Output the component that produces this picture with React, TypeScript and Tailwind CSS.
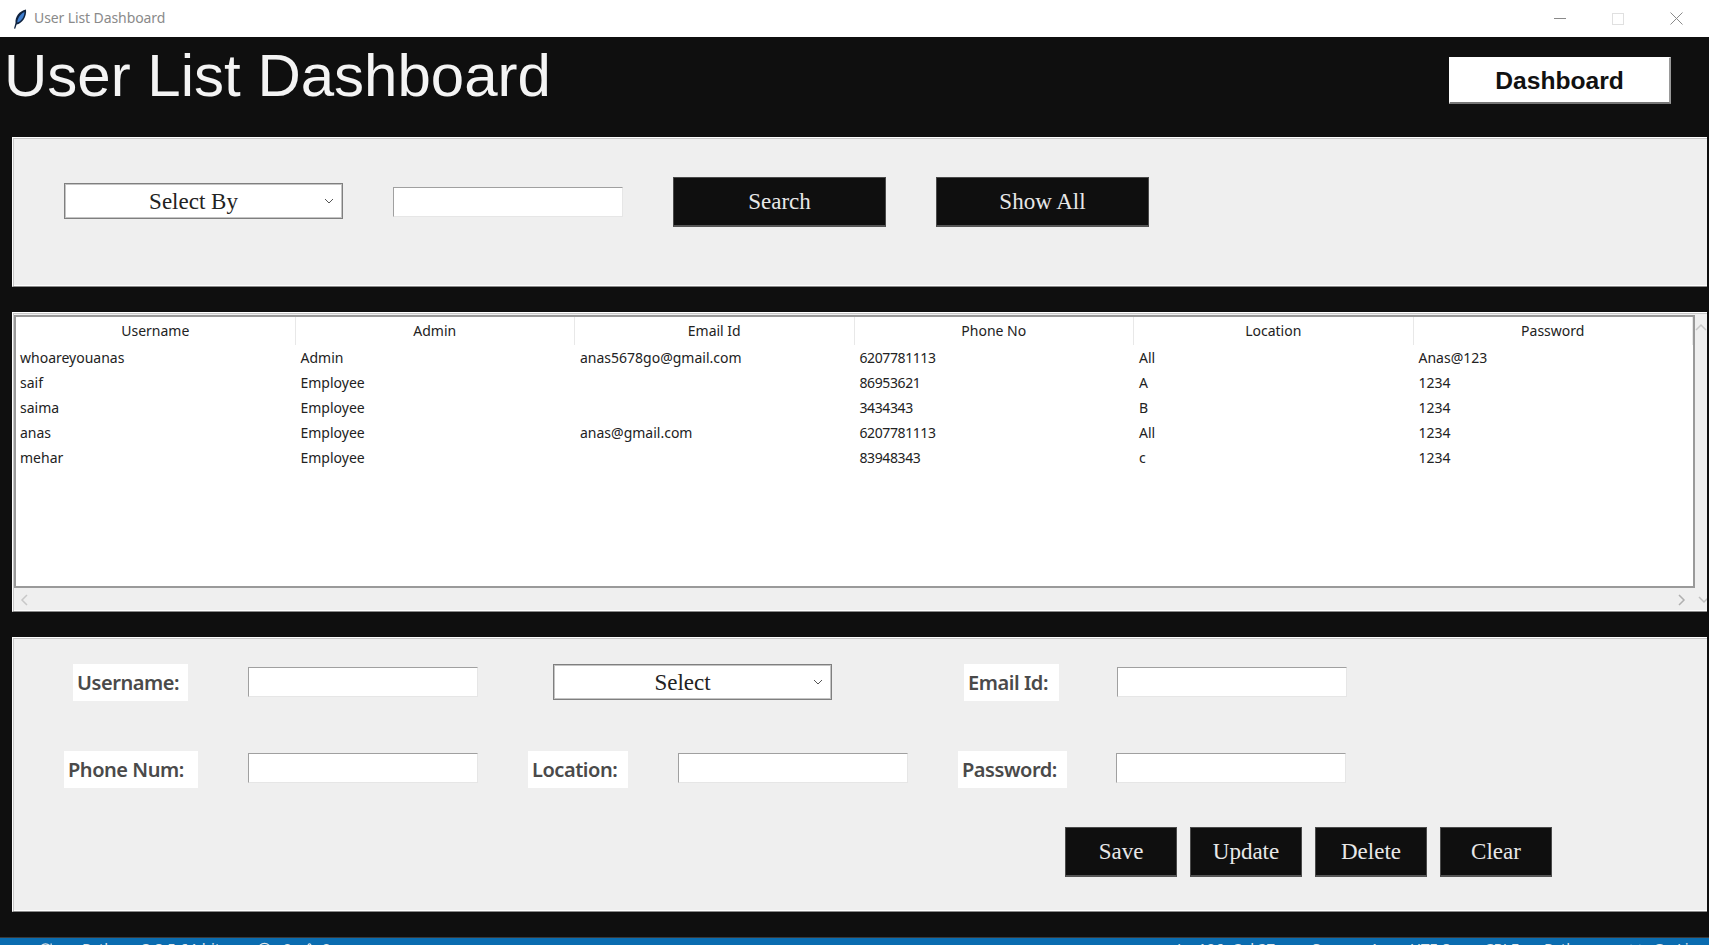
import { CircleX, Radio, RefreshCw, TriangleAlert } from 'lucide-react'

const rows = [
  ['whoareyouanas', 'Admin', 'anas5678go@gmail.com', '6207781113', 'All', 'Anas@123'],
  ['saif', 'Employee', '', '86953621', 'A', '1234'],
  ['saima', 'Employee', '', '3434343', 'B', '1234'],
  ['anas', 'Employee', 'anas@gmail.com', '6207781113', 'All', '1234'],
  ['mehar', 'Employee', '', '83948343', 'c', '1234'],
]

const headers = ['Username', 'Admin', 'Email Id', 'Phone No', 'Location', 'Password']

const panelEdge =
  'border border-r-0 border-t-white border-l-white border-b-[#8a8a8a] shadow-[inset_0_1px_0_#c8c8c8,inset_1px_0_0_#c8c8c8,inset_0_-1px_0_#ffffff]'

function Chevron({ className }: { className?: string }) {
  return (
    <svg className={className} width="10" height="6" viewBox="0 0 10 6" fill="none" stroke="#555" strokeWidth="1">
      <path d="M1 1l4 4 4-4" />
    </svg>
  )
}

function Combo({ label }: { label: string }) {
  return (
    <div className="relative flex h-[36px] w-[279px] items-center justify-center border border-[#7f7f7f] bg-white pt-[2px] shadow-[inset_0_0_0_1px_#c4c4c4] font-['Liberation_Serif',serif] text-[23px] text-[#222]">
      <span className="-ml-[20px]">{label}</span>
      <Chevron className="absolute right-[8px] top-[14px]" />
    </div>
  )
}

function Field({ className }: { className: string }) {
  return <div className={`h-[30px] w-[230px] border-t border-l border-t-[#a0a0a0] border-l-[#a0a0a0] border-r border-b border-r-[#e6e6e6] border-b-[#e6e6e6] bg-white ${className}`} />
}

function Label({ text, className }: { text: string; className: string }) {
  return (
    <div className={`flex h-[37px] items-center bg-white pl-[4px] font-['Noto_Sans',sans-serif] text-[20px] font-semibold tracking-[-0.45px] text-[#4a4a4a] ${className}`}>
      {text}
    </div>
  )
}

function DarkButton({ text, className }: { text: string; className: string }) {
  return (
    <button className={`flex items-center justify-center border border-[#4a4a4a] border-b-2 border-b-[#555] bg-[#0f0f0f] pt-[2px] font-['Liberation_Serif',serif] text-[23px] text-[#e8e8e8] ${className}`}>
      {text}
    </button>
  )
}

export default function App() {
  return (
    <div className="flex h-[945px] w-[1709px] flex-col overflow-hidden bg-[#0f0f0f] font-['Liberation_Sans',sans-serif]">
      {/* Title bar */}
      <div className="flex h-[37px] shrink-0 items-center bg-white pl-[13px]">
        <svg width="14" height="20" viewBox="0 0 14 20">
          <path d="M13 0.5C6 2 2 8 2.5 14L1 19.5l1.2.2 1.4-4.2C9 14.5 14 8 13 0.5z" fill="#10233f" />
          <path d="M11.5 3C7.5 5 4.5 9 4.2 13.5 8 12.5 11.5 8 11.5 3z" fill="#3f7fd0" />
        </svg>
        <span className="-mt-[2px] ml-[7px] font-['Noto_Sans',sans-serif] text-[14px] tracking-[-0.1px] text-[#8a8a8a]">User List Dashboard</span>
        <div className="ml-auto mr-[26px] flex items-center gap-[46px]">
          <div className="h-px w-[12px] bg-[#8a8a8a]" />
          <div className="h-[12px] w-[12px] border border-[#e0e0e0]" />
          <svg width="13" height="13" viewBox="0 0 13 13" stroke="#8a8a8a" strokeWidth="1">
            <path d="M0.5 0.5l12 12M12.5 0.5l-12 12" />
          </svg>
        </div>
      </div>

      {/* Header */}
      <div className="flex h-[100px] shrink-0 items-start">
        <h1 className="ml-[4px] mt-[4px] text-[60px] leading-[70px] text-[#f4f4f4]">User List Dashboard</h1>
        <button className="ml-auto mr-[38px] mt-[20px] h-[47px] w-[222px] border border-b-2 border-r-2 border-white border-b-[#777] border-r-[#999] bg-white pt-[2px] text-[24.6px] font-bold text-[#111]">
          Dashboard
        </button>
      </div>

      {/* Search panel */}
      <div className={`ml-[12px] mr-[2px] flex h-[150px] shrink-0 items-start bg-[#efefef] pl-[51px] ${panelEdge}`}>
        <div className="mt-[45px]">
          <Combo label="Select By" />
        </div>
        <Field className="ml-[50px] mt-[49px]" />
        <DarkButton text="Search" className="ml-[50px] mt-[39px] h-[50px] w-[213px]" />
        <DarkButton text="Show All" className="ml-[50px] mt-[39px] h-[50px] w-[213px]" />
      </div>

      {/* Table panel */}
      <div className={`ml-[12px] mr-[2px] mt-[25px] flex h-[300px] shrink-0 flex-col overflow-hidden bg-[#efefef] pl-[1px] pt-[2px] ${panelEdge}`}>
        <div className="flex">
          <div className="h-[273px] w-[1683px] border-2 border-[#9a9a9a] bg-white font-['Noto_Sans',sans-serif] text-[14px] text-[#222]">
            <div className="grid h-[28px] grid-cols-6 items-center text-center">
              {headers.map(h => (
                <div key={h} className="flex h-full items-center justify-center border-r border-[#e8e8e8] pb-[2px]">{h}</div>
              ))}
            </div>
            {rows.map(row => (
              <div key={row[0]} className="grid h-[25px] grid-cols-6 items-center">
                {row.map((cell, i) => (
                  <div key={i} className={i === 0 ? 'pl-[4px]' : i === 3 ? 'pl-[5px] tracking-[-0.4px]' : 'pl-[5px]'}>{cell}</div>
                ))}
              </div>
            ))}
          </div>
          <div className="flex flex-1 justify-center pt-[8px]">
            <svg className="shrink-0" width="12" height="8" viewBox="0 0 12 8" fill="none" stroke="#c8c8c8" strokeWidth="1.5"><path d="M1 7l5-5 5 5" /></svg>
          </div>
        </div>
        <div className="flex flex-1 items-center justify-between pl-[6px]">
          <svg width="8" height="12" viewBox="0 0 8 12" fill="none" stroke="#c8c8c8" strokeWidth="1.5"><path d="M7 1L2 6l5 5" /></svg>
          <div className="flex items-center gap-[12px]">
            <svg width="8" height="12" viewBox="0 0 8 12" fill="none" stroke="#b0b0b0" strokeWidth="1.5"><path d="M1 1l5 5-5 5" /></svg>
            <svg className="-mr-[3px]" width="12" height="8" viewBox="0 0 12 8" fill="none" stroke="#c0c0c0" strokeWidth="1.5"><path d="M1 1l5 5 5-5" /></svg>
          </div>
        </div>
      </div>

      {/* Form panel */}
      <div className={`ml-[12px] mr-[2px] mt-[25px] flex h-[275px] shrink-0 flex-col bg-[#efefef] ${panelEdge}`}>
        <div className="mt-[26px] flex items-start">
          <Label text="Username:" className="ml-[60px] w-[115px]" />
          <Field className="ml-[60px] mt-[3px]" />
          <div className="ml-[75px]">
            <Combo label="Select" />
          </div>
          <Label text="Email Id:" className="ml-[132px] w-[95px]" />
          <Field className="ml-[58px] mt-[3px]" />
        </div>
        <div className="mt-[50px] flex items-start">
          <Label text="Phone Num:" className="ml-[51px] w-[134px]" />
          <Field className="ml-[50px] mt-[2px]" />
          <Label text="Location:" className="ml-[50px] w-[100px]" />
          <Field className="ml-[50px] mt-[2px]" />
          <Label text="Password:" className="ml-[50px] w-[109px]" />
          <Field className="ml-[49px] mt-[2px]" />
        </div>
        <div className="mt-[39px] flex gap-[13px] pl-[1052px]">
          {['Save', 'Update', 'Delete', 'Clear'].map(t => (
            <DarkButton key={t} text={t} className="h-[50px] w-[112px]" />
          ))}
        </div>
      </div>

      {/* VS Code status bar peeking in under the window */}
      <div className="mt-[25px] flex h-[8px] shrink-0 items-start overflow-hidden border-t border-[#3a3a3a] bg-[#0a6cb0] pl-[38px] font-['Noto_Sans',sans-serif] text-[15px] leading-[20px] text-[#e8e8e8]">
        <span className="w-[44px] shrink-0 pt-[4px]"><RefreshCw size={15} /></span>
        <span className="w-[60px] shrink-0">Python</span>
        <span className="w-[115px] shrink-0 whitespace-nowrap">3.8.5 64-bit</span>
        <span className="w-[26px] shrink-0 pt-[4px]"><CircleX size={15} /></span>
        <span className="w-[19px] shrink-0">0</span>
        <span className="w-[20px] shrink-0 pt-[4px]"><TriangleAlert size={15} /></span>
        <span className="shrink-0">0</span>
        <span className="ml-auto w-[135px] shrink-0 whitespace-nowrap">Ln 196, Col 27</span>
        <span className="w-[98px] shrink-0 whitespace-nowrap">Spaces: 4</span>
        <span className="w-[74px] shrink-0">UTF-8</span>
        <span className="w-[60px] shrink-0">CRLF</span>
        <span className="w-[84px] shrink-0">Python</span>
        <span className="w-[25px] shrink-0 pt-[4px]"><Radio size={15} /></span>
        <span className="w-[56px] shrink-0 whitespace-nowrap">Go Live</span>
      </div>
    </div>
  )
}
